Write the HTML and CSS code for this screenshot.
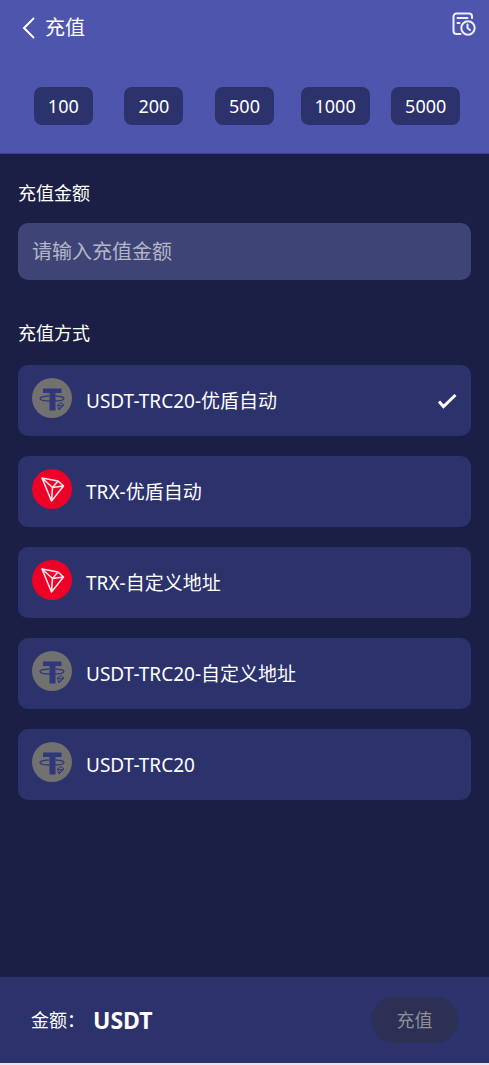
FILE: index.html
```html
<!DOCTYPE html>
<html lang="zh-CN">
<head>
<meta charset="utf-8">
<meta name="viewport" content="width=device-width, initial-scale=1">
<title>充值</title>
<link rel="stylesheet" href="styles.css">
</head>
<body>
<svg class="sprite" aria-hidden="true">
  <symbol id="usdt" viewBox="0 0 40 40">
    <circle cx="20" cy="20" r="20" fill="#71716f"/>
    <path d="M11 10.500h18.500v4.500H23.500V32.500h-6V15H11z" fill="#30377a"/>
    <path d="M17 18c-5 .3-9 1.200-9 2.600 0 1.600 5.500 2.600 12 2.600s12-1 12-2.600c0-1.400-4-2.300-8.500-2.600" fill="none" stroke="#30377a" stroke-width="1.300"/>
    <path d="M24.500 24.500l3.500-.5 4 2.500-5.500 6z" fill="#71716f"/>
    <path d="M25.500 27l3.500-2.500 3 2.500-5 5zM25.500 27l3.500.8 3-.8M29 27.800l-2 4.200" fill="none" stroke="#30377a" stroke-width="1" stroke-linejoin="round"/>
  </symbol>
  <symbol id="trx" viewBox="0 0 40 40">
    <circle cx="20" cy="20" r="20" fill="#ef0027"/>
    <path d="M10 9l16 3 5.500 5L19.500 32zM10 9l10.500 9.500L31.500 17M26 12l-5.500 6.500L19.500 32" fill="none" stroke="#ffe6ea" stroke-width="1.600" stroke-linejoin="round"/>
  </symbol>
</svg>
<header class="top">
  <div class="bar">
    <a class="back" href="#" aria-label="返回">
      <svg width="16" height="24" viewBox="0 0 16 24"><path d="M13 2L3 12l10 10" fill="none" stroke="#fff" stroke-width="2"/></svg>
    </a>
    <h1 class="title">充值</h1>
    <a class="history" href="#" aria-label="充值记录">
      <svg width="26" height="26" viewBox="0 0 26 26" fill="none" stroke="#eef0ff" stroke-width="2" stroke-linecap="round" stroke-linejoin="round">
        <path d="M21 7V5.500a3 3 0 0 0-3-3H5.500a3 3 0 0 0-3 3V20a3 3 0 0 0 3 3h4"/>
        <path d="M6.500 7h10M6.500 12h2"/>
        <circle cx="17" cy="17" r="6.700"/>
        <path d="M16.500 13.500V17l2.500 2"/>
      </svg>
    </a>
  </div>
  <div class="amounts">
    <button class="chip" type="button">100</button>
    <button class="chip" type="button">200</button>
    <button class="chip" type="button">500</button>
    <button class="chip" type="button">1000</button>
    <button class="chip" type="button">5000</button>
  </div>
</header>
<main class="content">
  <label class="heading" for="amount">充值金额</label>
  <input class="amount" id="amount" type="text" inputmode="decimal" placeholder="请输入充值金额">
  <h2 class="heading" id="methods-title">充值方式</h2>
  <div class="methods" role="radiogroup" aria-labelledby="methods-title">
    <label class="method"><svg class="coin"><use href="#usdt"/></svg><span class="name">USDT-TRC20-优盾自动</span><input class="radio" type="radio" name="method" checked><svg class="check" viewBox="0 0 20 16"><path d="M2 8.500l4.500 5L18.500 2" fill="none" stroke="#fff" stroke-width="3"/></svg></label>
    <label class="method"><svg class="coin"><use href="#trx"/></svg><span class="name">TRX-优盾自动</span><input class="radio" type="radio" name="method"><svg class="check" viewBox="0 0 20 16"><path d="M2 8.500l4.500 5L18.500 2" fill="none" stroke="#fff" stroke-width="3"/></svg></label>
    <label class="method"><svg class="coin"><use href="#trx"/></svg><span class="name">TRX-自定义地址</span><input class="radio" type="radio" name="method"><svg class="check" viewBox="0 0 20 16"><path d="M2 8.500l4.500 5L18.500 2" fill="none" stroke="#fff" stroke-width="3"/></svg></label>
    <label class="method"><svg class="coin"><use href="#usdt"/></svg><span class="name">USDT-TRC20-自定义地址</span><input class="radio" type="radio" name="method"><svg class="check" viewBox="0 0 20 16"><path d="M2 8.500l4.500 5L18.500 2" fill="none" stroke="#fff" stroke-width="3"/></svg></label>
    <label class="method"><svg class="coin"><use href="#usdt"/></svg><span class="name">USDT-TRC20</span><input class="radio" type="radio" name="method"><svg class="check" viewBox="0 0 20 16"><path d="M2 8.500l4.500 5L18.500 2" fill="none" stroke="#fff" stroke-width="3"/></svg></label>
  </div>
</main>
<footer class="footer">
  <span class="total">金额：</span>
  <strong class="currency">USDT</strong>
  <button class="submit" type="submit" disabled>充值</button>
</footer>
</body>
</html>
```
FILE: styles.css
```css
* {
  box-sizing: border-box;
}

body {
  margin: 0;
  min-height: 100vh;
  display: flex;
  flex-direction: column;
  background: #1c1f45;
  border-bottom: 2px solid #e6e4ee;
  color: #fff;
  font: 18px/24px "Noto Sans", "Noto Sans CJK SC", sans-serif;
}

button,
input {
  font: inherit;
  color: inherit;
}

.sprite {
  position: absolute;
  width: 0;
  height: 0;
}

.top {
  background: #4e55ad;
  border-bottom: 1px solid #3d438c;
  padding-bottom: 28px;
}

.bar {
  display: flex;
  align-items: center;
  height: 55px;
  padding: 0 12px 0 21px;
}

.back,
.history {
  display: flex;
}

.history {
  margin: 0 0 7px auto;
}

.title {
  margin: 0 0 0 8px;
  font-size: 20px;
  font-weight: 400;
}

.amounts {
  display: grid;
  grid-template-columns: repeat(5, 1fr);
  justify-items: center;
  padding: 32px 18px 0;
}

.chip {
  height: 38px;
  padding: 0 14px;
  border: 0;
  border-radius: 8px;
  background: #2c326b;
}

.content {
  flex: 1;
  display: flex;
  flex-direction: column;
  padding: 27px 18px;
}

.heading {
  margin: 0;
  font-size: 18px;
  font-weight: 400;
}

.amount {
  width: 100%;
  height: 57px;
  margin: 18px 0 41px;
  padding: 0 14px;
  border: 0;
  border-radius: 10px;
  background: #3f4476;
  font-size: 20px;
}

.amount::placeholder {
  color: #b4b6c8;
  opacity: 1;
}

.methods {
  display: grid;
  gap: 20px;
  margin-top: 20px;
}

.method {
  display: flex;
  align-items: center;
  height: 71px;
  padding: 0 14px;
  border-radius: 10px;
  background: #2c326b;
  font-size: 19px;
}

.coin {
  width: 40px;
  height: 40px;
  margin: 0 14px 6px 0;
}

.name {
  flex: 1;
}

.radio {
  appearance: none;
  width: 0;
  height: 0;
  margin: 0;
}

.check {
  width: 20px;
  height: 16px;
  visibility: hidden;
}

.radio:checked + .check {
  visibility: visible;
}

.footer {
  display: flex;
  align-items: center;
  height: 86px;
  padding: 0 31px;
  background: #2c326b;
}

.currency {
  margin-left: 8px;
  font-size: 23px;
}

.submit {
  width: 87px;
  height: 46px;
  margin-left: auto;
  padding: 0;
  border: 0;
  border-radius: 23px;
  background: #2d3054;
  color: #8d8e98;
}
```
